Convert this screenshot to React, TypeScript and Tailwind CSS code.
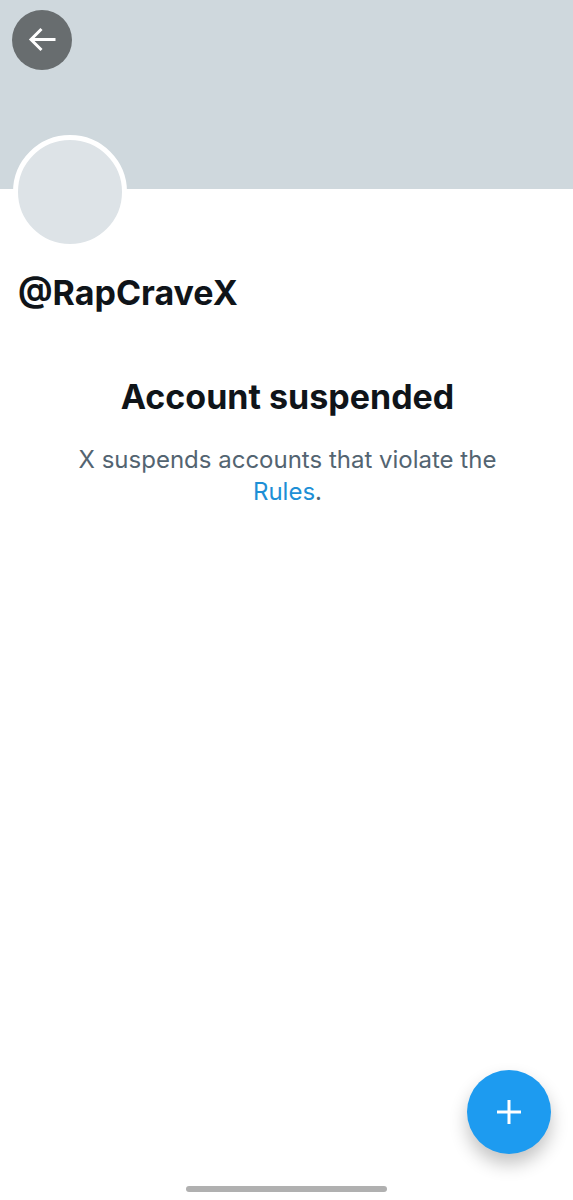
import type { ReactNode } from "react";

const RULES_URL = "https://x.com/rules";

function BackButton() {
  return (
    <button
      type="button"
      aria-label="Back"
      className="flex size-[60px] items-center justify-center rounded-full bg-[#686d6f] text-white"
    >
      <svg width="28" height="28" viewBox="0 0 28 28" fill="none" stroke="currentColor" strokeWidth="3">
        <path d="M27.5 13.5H3" />
        <path d="M13.5 3L3 13.5L13.5 24" />
      </svg>
    </button>
  );
}

function ComposeButton() {
  return (
    <button
      type="button"
      aria-label="New post"
      className="fixed right-[22px] bottom-[46px] flex size-[84px] items-center justify-center rounded-full bg-[#1d9bf0] text-white shadow-[0_10px_18px_rgba(0,0,0,0.24)]"
    >
      <svg width="26" height="26" viewBox="0 0 26 26" fill="none" stroke="currentColor" strokeWidth="3">
        <path d="M13 1v24M1 13h24" />
      </svg>
    </button>
  );
}

interface EmptyStateProps {
  title: string;
  children: ReactNode;
}

function EmptyState({ title, children }: EmptyStateProps) {
  return (
    <section className="mt-16 pr-[62px] pl-16 text-center">
      <h2 className="text-[34px] leading-10 font-bold">{title}</h2>
      <p className="mt-[27px] text-2xl leading-8 text-[#536471]">{children}</p>
    </section>
  );
}

export default function App() {
  return (
    <div className="flex min-h-screen flex-col bg-white font-['Inter','Liberation_Sans',sans-serif] text-[#0f1419]">
      <header className="h-[189px] bg-[#cfd8dd] px-3 pt-[10px]">
        <BackButton />
      </header>

      <main className="flex-1">
        <div className="-mt-[54px] px-[13px]">
          <div className="size-[114px] rounded-full border-[5px] border-white bg-[#dde3e7]" />
        </div>
        <h1 className="mt-6 px-[18px] text-[34px] leading-10 font-bold">@RapCraveX</h1>

        <EmptyState title="Account suspended">
          X suspends accounts that violate the{" "}
          <a href={RULES_URL} className="text-[#1d8fd6]">
            Rules
          </a>
          .
        </EmptyState>
      </main>

      <ComposeButton />

      <footer className="flex justify-center pb-2">
        <div className="h-[6px] w-[201px] rounded-full bg-[#b0b0b0]" />
      </footer>
    </div>
  );
}
